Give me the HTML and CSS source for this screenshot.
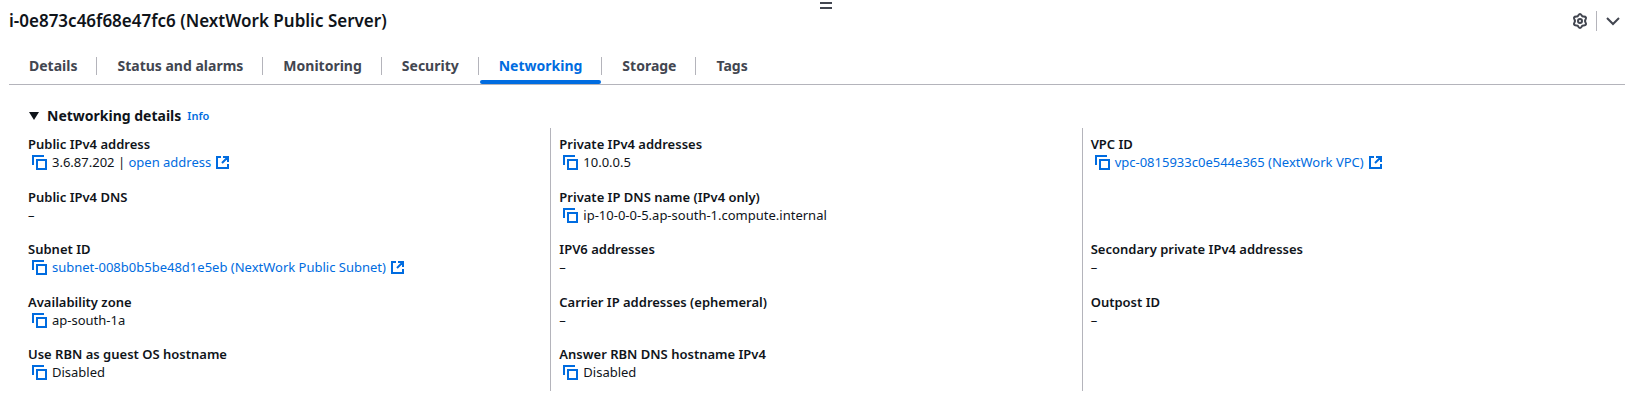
FILE: index.html
```html
<!DOCTYPE html>
<html lang="en">
<head>
<meta charset="utf-8">
<title>Instance networking</title>
<link rel="stylesheet" href="styles.css">
</head>
<body>
<svg class="sprite" aria-hidden="true">
  <symbol id="copy" viewBox="0 0 16 16">
    <path d="M1 11V2h11M5 6h9v9H5z" fill="none" stroke="currentColor" stroke-width="2"/>
  </symbol>
  <symbol id="external" viewBox="0 0 16 16">
    <path d="M6 3H2v11h11v-4M8 3h5v5M13 3L7 9" fill="none" stroke="currentColor" stroke-width="2"/>
  </symbol>
</svg>
<main class="panel">
  <button class="drag" aria-label="Resize panel"></button>
  <header class="head">
    <h1 class="title">i-0e873c46f68e47fc6 (NextWork Public Server)</h1>
    <div class="tools">
      <button class="tool" aria-label="Settings"><svg class="icon" viewBox="0 0 16 16"><path d="M8 1C9.300 1 9.600 2.900 10.500 3.400C11.400 3.900 13.200 3.200 13.900 4.400C14.600 5.500 13 6.900 13 8C13 9.100 14.600 10.500 13.900 11.600C13.200 12.800 11.400 12.100 10.500 12.600C9.600 13.100 9.300 15 8 15C6.700 15 6.400 13.100 5.500 12.600C4.600 12.100 2.800 12.800 2.100 11.600C1.400 10.500 3 9.100 3 8C3 6.900 1.400 5.500 2.100 4.400C2.800 3.200 4.600 3.900 5.500 3.400C6.400 2.900 6.700 1 8 1Z" fill="none" stroke="currentColor" stroke-width="2"/><circle cx="8" cy="8" r="2" fill="none" stroke="currentColor" stroke-width="2"/></svg></button>
      <button class="tool tool-last" aria-label="Collapse panel"><svg class="icon" viewBox="0 0 16 16"><path d="M2 5l6 6 6-6" fill="none" stroke="currentColor" stroke-width="2"/></svg></button>
    </div>
  </header>
  <nav class="tabs">
    <a class="tab" href="#details"><span class="tab-text">Details</span></a>
    <a class="tab" href="#status"><span class="tab-text">Status and alarms</span></a>
    <a class="tab" href="#monitoring"><span class="tab-text">Monitoring</span></a>
    <a class="tab" href="#security"><span class="tab-text">Security</span></a>
    <a class="tab active" href="#networking" aria-current="page"><span class="tab-text">Networking</span></a>
    <a class="tab" href="#storage"><span class="tab-text">Storage</span></a>
    <a class="tab" href="#tags"><span class="tab-text">Tags</span></a>
  </nav>
  <section class="details">
    <div class="section-head">
      <button class="toggle" aria-expanded="true"><svg class="caret" viewBox="0 0 10 8"><path d="M0 0h10L5 8z" fill="currentColor"/></svg><span>Networking details</span></button>
      <a class="info" href="#info">Info</a>
    </div>
    <div class="columns">
      <dl class="column">
        <div class="field"><dt>Public IPv4 address</dt><dd><button class="copy" aria-label="Copy"><svg class="icon"><use href="#copy"/></svg></button><span>3.6.87.202 | <a href="#open">open address</a></span><svg class="icon ext"><use href="#external"/></svg></dd></div>
        <div class="field"><dt>Public IPv4 DNS</dt><dd>–</dd></div>
        <div class="field"><dt>Subnet ID</dt><dd><button class="copy" aria-label="Copy"><svg class="icon"><use href="#copy"/></svg></button><a href="#subnet">subnet-008b0b5be48d1e5eb (NextWork Public Subnet)</a><svg class="icon ext"><use href="#external"/></svg></dd></div>
        <div class="field"><dt>Availability zone</dt><dd><button class="copy" aria-label="Copy"><svg class="icon"><use href="#copy"/></svg></button>ap-south-1a</dd></div>
        <div class="field"><dt>Use RBN as guest OS hostname</dt><dd><button class="copy" aria-label="Copy"><svg class="icon"><use href="#copy"/></svg></button>Disabled</dd></div>
      </dl>
      <dl class="column">
        <div class="field"><dt>Private IPv4 addresses</dt><dd><button class="copy" aria-label="Copy"><svg class="icon"><use href="#copy"/></svg></button>10.0.0.5</dd></div>
        <div class="field"><dt>Private IP DNS name (IPv4 only)</dt><dd><button class="copy" aria-label="Copy"><svg class="icon"><use href="#copy"/></svg></button>ip-10-0-0-5.ap-south-1.compute.internal</dd></div>
        <div class="field"><dt>IPV6 addresses</dt><dd>–</dd></div>
        <div class="field"><dt>Carrier IP addresses (ephemeral)</dt><dd>–</dd></div>
        <div class="field"><dt>Answer RBN DNS hostname IPv4</dt><dd><button class="copy" aria-label="Copy"><svg class="icon"><use href="#copy"/></svg></button>Disabled</dd></div>
      </dl>
      <dl class="column">
        <div class="field field-tall"><dt>VPC ID</dt><dd><button class="copy" aria-label="Copy"><svg class="icon"><use href="#copy"/></svg></button><a href="#vpc">vpc-0815933c0e544e365 (NextWork VPC)</a><svg class="icon ext"><use href="#external"/></svg></dd></div>
        <div class="field"><dt>Secondary private IPv4 addresses</dt><dd>–</dd></div>
        <div class="field"><dt>Outpost ID</dt><dd>–</dd></div>
      </dl>
    </div>
  </section>
</main>
</body>
</html>
```

FILE: styles.css
```css
* { box-sizing: border-box; }
body {
  margin: 0;
  background: #fff;
  color: #0f141a;
  font: 13px/18px "Noto Sans", "Open Sans", sans-serif;
}
button {
  padding: 0;
  border: 0;
  background: none;
  color: inherit;
  font: inherit;
  cursor: pointer;
}
a { color: #006ce0; text-decoration: none; }
.sprite { position: absolute; width: 0; height: 0; }
.icon { display: block; width: 16px; height: 16px; }
.panel {
  display: flex;
  flex-direction: column;
  min-height: 100vh;
  padding: 0 9px 11px;
}
.drag {
  align-self: center;
  width: 12px;
  height: 7px;
  margin-top: 2px;
  margin-left: 18px;
  border: solid #424650;
  border-width: 2px 0;
}
.head { display: flex; align-items: center; justify-content: space-between; height: 24px; }
.title { margin: 0; font-size: 17px; line-height: 24px; font-weight: 600; }
.tools { display: flex; align-items: center; color: #424650; }
.tool { padding: 2px 8px; }
.tool-last { padding: 2px 4px 2px 8px; border-left: 1px solid #b4b4bb; }
.tabs { display: flex; height: 52px; align-items: flex-end; border-bottom: 1px solid #b4b4bb; }
.tab {
  display: flex;
  flex-direction: column;
  color: #424650;
  font-size: 14px;
  font-weight: 700;
}
.tab::after { content: ""; height: 4px; margin: 5px 1px 0; border-radius: 4px; }
.tab-text { padding: 0 19px 0 20px; border-right: 1px solid #b4b4bb; }
.tab:last-child .tab-text { border-right: 0; }
.active { color: #006ce0; }
.active::after { background: #006ce0; }
.details { display: flex; flex-direction: column; flex: 1; padding: 21px 12px 0 10px; }
.section-head { display: flex; align-items: baseline; gap: 6px; padding-left: 10px; }
.toggle { display: flex; align-items: center; gap: 8px; font-size: 14px; line-height: 20px; font-weight: 700; }
.caret { width: 10px; height: 8px; }
.info { font-size: 11px; font-weight: 600; }
.columns { display: grid; flex: 1; grid-template-columns: repeat(3, 1fr); margin-top: 2px; }
.column {
  display: grid;
  grid-template-rows: repeat(5, 1fr);
  margin: 0;
  padding: 0 8px;
  border-left: 1px solid #b4b4bb;
}
.column:first-child { border-color: transparent; }
.field { padding-top: 7px; }
.field-tall { grid-row: span 2; }
dt { font-size: 13px; font-weight: 600; }
dd { display: flex; align-items: center; margin: 0; }
.copy { margin: 0 4px; color: #006ce0; }
.ext { margin-left: 4px; color: #006ce0; }
```
